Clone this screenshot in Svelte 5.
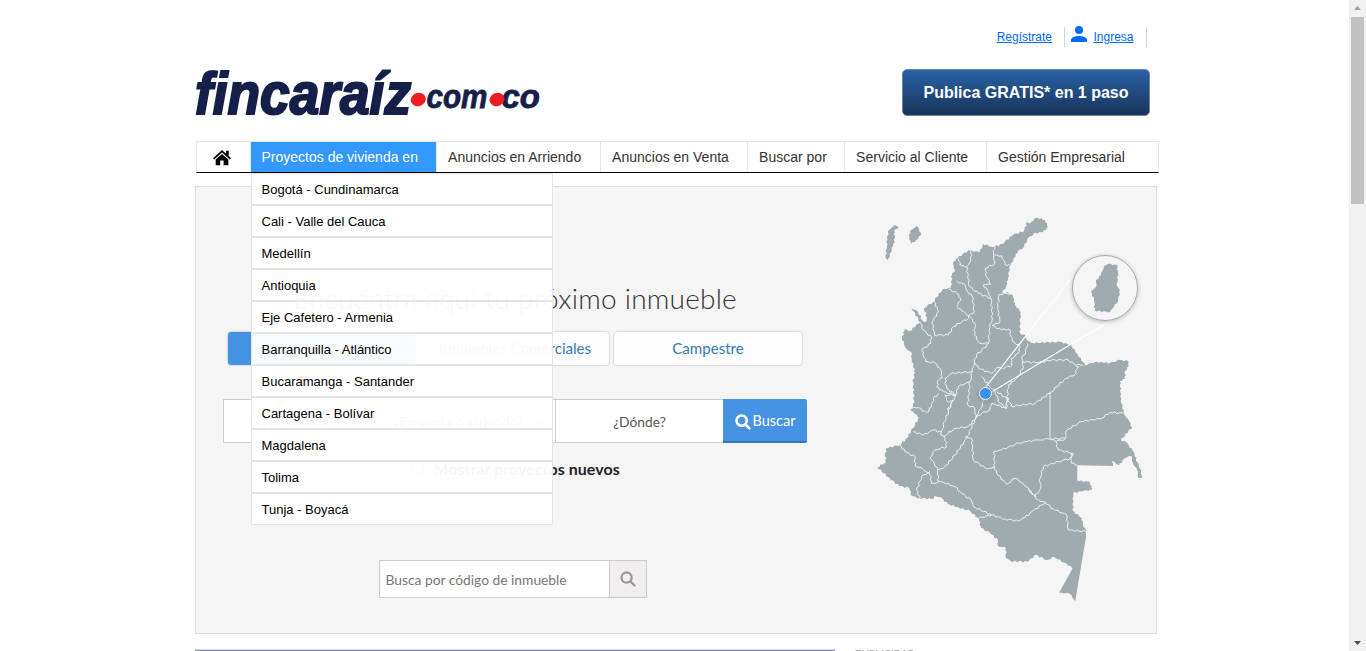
<script>
  const navItems = [
    { label: 'Anuncios en Arriendo', w: 164 },
    { label: 'Anuncios en Venta', w: 147 },
    { label: 'Buscar por', w: 97 },
    { label: 'Servicio al Cliente', w: 142 },
    { label: 'Gestión Empresarial', w: 172 }
  ];
  const places = [
    'Bogotá - Cundinamarca', 'Cali - Valle del Cauca', 'Medellín', 'Antioquia',
    'Eje Cafetero - Armenia', 'Barranquilla - Atlántico', 'Bucaramanga - Santander',
    'Cartagena - Bolívar', 'Magdalena', 'Tolima', 'Tunja - Boyacá'
  ];

  const country = '1038,218 1045,220 1048,227 1043,232 1036,233 1029,237 1023,248 1018,251 1010,266 1008,278 1006,287 1001,294 1007,292 1013,296 1015,305 1021,312 1020,322 1020,333 1026,336 1027,340 1031,343 1060,342 1071,345 1078,355 1085,365 1095,362 1110,363 1120,360 1128,361 1129,366 1125,371 1125,379 1120,381 1121,400 1124,414 1128,419 1132,427 1121,440 1126,442 1134,452 1137,462 1141,470 1141.5,478 1138.5,478 1137,470 1133,463 1131,456 1125,458 1119,465 1112,461 1113,466';
  const straightEast = '1077.3,465.3 1077.3,480.7';
  const south = '1077.3,480.7 1090,482 1092,490 1083,491 1073,493 1073,511 1082,518 1083,525 1086,530';
  const straightSouth = '1086,537 1075.3,601';
  const west = '1075.3,601 1070,594 1066,593 1059,593';
  const coast = '1072.7,568 1065,563 1054,557 1047,560 1036,555 1027,561.5 1011,561.5 1006,558 1006,548 998,546 998,540 990,533 981,528 979,519 970,511 957,507 948,504 940,497 934,496 933,499 919,498 912,496 909,488 899,486 888,477 877.3,467.3 886,462 885,453 887,448 900,445 907,438 913,428 919,418 915,414 910,410 913,407 914,400 913,382 915,373 912,360 911,352 905.7,348 902,338 905,329 910,331 920,322 911.5,308 917.7,311 922,320 926,322 926.7,317 924,308 933,302 943,289 951,288 952,275 955,270 953,264 956,259 968,250.5 980,252 983,244 993,247 1002,244 1013,235 1024,231 1027,222 1031,223 1034,219 1038,218';
  const borders = [
    '318,137 318,165 305,185 313,245 340,265 378,280 382,340 375,365 370,415 345,415 328,390 330,355 312,332',
    '280,160 285,180 305,188', '275,228 300,240 308,260 322,275 328,320 312,332 310,340 265,365 250,390 208,390 202,350 220,320 208,290',
    '252,252 275,265 287,280 276,305 290,318 312,332', '388,122 386,150 388,178 360,190 365,215 378,238 355,240 372,262 374,280',
    '388,150 410,152 420,178 437,183', '437,265 402,268 398,310 405,350 382,362 410,375 432,372 442,408 466,425',
    '165,350 175,375 200,398 198,415 170,435 182,470 210,473 225,490 233,518 220,525 215,545 235,560 272,570',
    '372,415 335,450 328,470 322,500 258,505 240,520 245,550 272,570 280,545 305,533 315,530 322,500',
    '466,425 460,445 438,462 442,480 415,490 395,488 380,505 340,490 328,470',
    '488,415 482,440 470,460 475,485 462,510 450,525 430,540 424,610 405,595 390,560 370,540 350,515',
    '315,530 308,600 330,610 332,640 310,665 270,670 235,695',
    '272,570 262,590 250,620 235,660 228,690 240,700 245,725 210,735 195,758 205,770 218,795',
    '272,570 240,570 250,592 265,585 248,615', '140,610 160,608 185,623 200,605 205,580 220,565',
    '145,680 175,690 205,675 230,682', '332,640 305,700 270,750 240,785 218,795 220,830',
    '355,560 352,600 340,625 332,640', '395,560 425,580 424,610 390,598 380,595 375,615 350,625 332,640',
    '300,695 320,700 325,765 365,792 388,785 388,738 410,735 450,718 480,710 520,705 550,702 600,700',
    '470,470 520,473 560,465 610,465 640,485 628,510 602,520 560,560 510,595 440,604 425,575',
    '635,480 655,480', '555,700 572,710 600,702 605,675 650,650 710,640 735,622 775,625',
    '572,710 580,735 625,745 615,760 580,770 535,785 525,820 527,850 510,875 492,855',
    '618,745 620,775 637,780', '105,720 120,740 150,755 150,782 172,790 195,810 200,835 230,830 270,845 290,865 318,885 325,905 380,930 420,942 460,948 480,938 500,920 540,893 565,912 605,930 610,975 663,980',
    '388,785 395,805 425,838 450,820 475,835 492,855 520,885 545,895', '195,800 170,815 155,855 165,880', '340,940 380,930'
  ];
  // Subdivides a polyline and offsets the new points, giving a natural boundary.
  function rough(points, amount, step) {
    const p = points.split(' ').map((s) => s.split(',').map(Number));
    const out = [p[0]];
    for (let i = 1; i < p.length; i++) {
      const [ax, ay] = p[i - 1];
      const [bx, by] = p[i];
      const len = Math.hypot(bx - ax, by - ay);
      const n = Math.max(1, Math.round(len / step));
      for (let k = 1; k < n; k++) {
        const t = k / n;
        const h = Math.sin((ax + bx * 1.7 + ay) * 12.9 + k * 2.3) * amount;
        out.push([ax + (bx - ax) * t - ((by - ay) / len) * h, ay + (by - ay) * t + ((bx - ax) / len) * h]);
      }
      out.push([bx, by]);
    }
    return out.map(([x, y]) => x.toFixed(1) + ',' + y.toFixed(1)).join(' ');
  }
  const outline = [rough(country, 0.8, 2), straightEast, rough(south, 0.8, 2), straightSouth, rough(west, 0.6, 2), rough(coast, 0.9, 2)].join(' ');
</script>

{#snippet magnifier()}
  <svg class="mag" viewBox="0 0 16 16"><circle cx="6.6" cy="6.6" r="5.1" /><path d="M10.5 10.5 14.4 14.4" /></svg>
{/snippet}

<div class="window">
  <div class="page">
    <header>
      <div class="user">
        <a href="#registro">Regístrate</a>
        <span class="login">
          <svg width="16" height="16" viewBox="0 0 16 16"><circle cx="8" cy="4" r="4" /><path d="M0 16v-2c0-2.7 4.5-4 8-4s8 1.3 8 4v2z" /></svg>
          <a href="#ingresa">Ingresa</a>
        </span>
      </div>
      <div class="brand">
        <svg class="logo" width="350" height="60" viewBox="0 0 350 60">
          <g class="word">
            <text class="big" x="0" y="50.3" font-size="59" textLength="216" lengthAdjust="spacingAndGlyphs">fincaraíz</text>
            <text x="231.5" y="43.6" font-size="32.5" textLength="61" lengthAdjust="spacingAndGlyphs">com</text>
            <text x="306.5" y="43.6" font-size="32.5" textLength="38.5" lengthAdjust="spacingAndGlyphs">co</text>
          </g>
          <g fill="#ef1c23">
            <ellipse cx="223.3" cy="35.5" rx="7.6" ry="6.6" transform="rotate(-20 223.3 35.5)" />
            <ellipse cx="302" cy="35.5" rx="7.6" ry="6.6" transform="rotate(-20 302 35.5)" />
          </g>
        </svg>
        <button class="publish">Publica GRATIS* en 1 paso</button>
      </div>
    </header>

    <nav>
      <div class="home">
        <svg width="18" height="16" viewBox="0 0 18 16"><path d="M9 0 0 8.2 1.2 9.5 9 2.6l7.8 6.9L18 8.2 15.7 6V.8h-2.6v2.9z" /><path d="M9 4 2.7 9.5V15.2h4.5v-4.7h3.4v4.7h4.7V9.5z" /></svg>
      </div>
      <div class="active">
        Proyectos de vivienda en
        <ul>
          {#each places as place}<li><span>{place}</span></li>{/each}
        </ul>
      </div>
      {#each navItems as item}
        <div class="item" style="width: {item.w}px">{item.label}</div>
      {/each}
    </nav>

    <main>
      <section class="form">
        <h1>Encuentra aquí tu próximo inmueble</h1>
        <div class="tabs">
          <div class="tab on">Vivienda</div>
          <div class="tab">Inmuebles Comerciales</div>
          <div class="tab">Campestre</div>
        </div>
        <div class="search">
          <div class="field what">¿Qué buscas?<svg width="10" height="6" viewBox="0 0 10 6"><path d="M.5.5 5 5 9.5.5" /></svg></div>
          <div class="field deal">¿En venta o arriendo?<svg width="10" height="6" viewBox="0 0 10 6"><path d="M.5.5 5 5 9.5.5" /></svg></div>
          <div class="field where">¿Dónde?</div>
          <button class="go">{@render magnifier()}Buscar</button>
        </div>
        <label><span class="check"></span>Mostrar proyectos nuevos</label>
        <div class="code">
          <span>Busca por código de inmueble</span>
          <button>{@render magnifier()}</button>
        </div>
      </section>
      <svg class="map" width="285" height="410" viewBox="865 205 285 410">
        <defs>
          <filter id="soft" x="-30%" y="-30%" width="160%" height="160%"><feDropShadow dx="0" dy="1" stdDeviation="2" flood-opacity=".25" /></filter>
        </defs>
        <g class="land">
          <polygon points={outline} />
          <polygon points={rough('895,225 899,228 894,230 895,238 893,246 888,260 885.5,258 887,246 887,238 889,230', 0.8, 2.2)} />
          <polygon points={rough('917,226 921,233 918,239 911,244 909,239 910,231', 0.8, 2.2)} />
        </g>
        <g class="borders" transform="translate(865 205) scale(.33333)">
          {#each borders as line}<polyline points={rough(line, 2.8, 7)} />{/each}
          <path d="M555 560V700" />
        </g>
        <g class="rays"><path d="M985 388 1073 276" /><path d="M990 393 1113 319" /></g>
        <circle class="lens" cx="1105" cy="288" r="32.5" filter="url(#soft)" />
        <polygon class="inset" points={rough('1108,264 1117,265 1118,273 1117,286 1120,290 1118,301 1114,307 1110,312 1095,311 1094,300 1091,291 1096,287 1096,280 1101,275 1104,266', 0.8, 2.2)} />
        <circle class="halo" cx="986" cy="395" r="9" />
        <circle class="dot" cx="985.4" cy="393.5" r="6" />
      </svg>
    </main>

    <footer><div class="rule"></div><span>PUBLICIDAD</span></footer>
  </div>
  <div class="scrollbar">
    <svg width="7" height="4" viewBox="0 0 7 4"><path d="M0 4 3.5 0 7 4z" fill="#a3a3a3" /></svg>
    <div class="thumb"></div>
    <svg width="7" height="4" viewBox="0 0 7 4"><path d="M0 0 3.5 4 7 0z" fill="#505050" /></svg>
  </div>
</div>

<style>
  :global(body) { background: #fff; overflow: hidden; }
  * { box-sizing: border-box; }
  .window { display: grid; grid-template-columns: 1fr 17px; height: 651px; overflow: hidden; font-family: "Liberation Sans", Arial, sans-serif; }
  .page { width: 964px; height: 651px; margin-left: 195px; overflow: hidden; }
  header { height: 141px; padding-top: 26px; }
  .user { display: flex; justify-content: flex-end; height: 21px; margin-right: 12px; padding-top: 1px; font-size: 12px; line-height: 20px; }
  .user a { color: #0069ff; text-decoration: underline; }
  .login { display: flex; width: 83px; height: 20px; margin-left: 12px; padding-left: 6px; border-left: 1px solid #c9d5ea; border-right: 1px solid #c9d5ea; }
  .login svg { margin: -1px 6.5px 0 0; fill: #0069ff; }
  .brand { display: flex; justify-content: space-between; padding-right: 9px; margin-top: 17px; }
  .logo { flex: none; overflow: visible; }
  .word { font-family: "Liberation Sans", Arial, sans-serif; font-weight: bold; font-style: italic; font-variant-ligatures: none; fill: #151f49; stroke: #151f49; stroke-width: .8; }
  .big { stroke-width: 2.2; }
  .publish { width: 248px; height: 47px; margin-top: 5px; border: 1px solid #7180a5; border-radius: 5px; background: linear-gradient(#2a61a7, #18355a); color: #fff; font: bold 16px "Liberation Sans", Arial, sans-serif; padding: 0; white-space: nowrap; }
  nav { display: flex; width: 963px; height: 32px; margin-left: 1px; border: 1px solid #e5e5e5; border-bottom-color: #000; font-size: 14px; line-height: 30px; color: #333; white-space: nowrap; }
  .home { flex: none; width: 54px; border-right: 1px solid #e5e5e5; padding: 8px 0 0 16px; line-height: 0; }
  .active { position: relative; flex: none; width: 186px; padding-left: 10.5px; background: #39f; background-clip: padding-box; border-right: 1px solid #e5e5e5; color: #fff; }
  .item { flex: none; padding-left: 11.1px; border-right: 1px solid #e5e5e5; }
  .item:last-child { flex: 1; border-right: 0; }
  ul { position: absolute; z-index: 2; left: 0; top: 31px; width: 302px; margin: 0; padding: 0; list-style: none; color: #000; font-size: 13px; }
  li { height: 32px; padding-left: 9.5px; border: 1px solid #e5e5e5; background: rgba(255, 255, 255, .96); line-height: 31px; }
  main { display: flex; width: 962px; height: 448px; margin-top: 13px; border: 1px solid #ddd; background: #f5f5f5; }
  .form { display: flex; flex-direction: column; align-items: center; width: 638px; font-family: Lato, sans-serif; }
  h1 { margin: 92px 0 0; height: 52px; font-size: 28px; font-weight: 300; letter-spacing: .24px; line-height: 38px; color: #333; white-space: nowrap; }
  .tabs { display: flex; gap: 3px; }
  .tab { width: 190px; height: 35px; border: 1px solid #ddd; border-radius: 4px; background: #fdfdfd; color: #337ab7; font-size: 15.1px; line-height: 33px; text-align: center; white-space: nowrap; }
  .tab.on { background: #4593e2; color: #fff; }
  .search { display: flex; width: 584px; height: 44px; margin-top: 33px; font-size: 13.8px; line-height: 44px; color: #555; }
  .field { display: flex; align-items: center; justify-content: center; padding-top: 2px; border: 1px solid #ccc; border-right: 0; background: #fff; white-space: nowrap; }
  .field svg { fill: none; stroke: #555; margin-left: 15px; }
  .what { width: 138px; padding-left: 25px; }
  .deal { width: 194px; padding-left: 25px; border-right: 0; }
  .where { width: 168px; }
  .go { display: flex; align-items: center; justify-content: center; width: 84px; height: 44px; padding: 1px 0 0; border: 0; border-bottom: 2px solid #2f77c0; border-radius: 0 2px 2px 0; background: #4593e2; color: #fff; font: 14.5px Lato, sans-serif; }
  .mag { width: 16px; height: 16px; fill: none; stroke: currentColor; stroke-width: 2.6; stroke-linecap: round; }
  .go .mag { margin: 2px 2px 0 0; }
  label { display: flex; align-items: center; height: 20px; margin-top: 15px; padding-left: 2px; font-size: 16px; font-weight: bold; letter-spacing: .04px; color: #222; white-space: nowrap; }
  .check { width: 12px; height: 12px; margin-right: 9px; border: 1px solid #999; background: #fff; border-radius: 2px; }
  .code { display: flex; width: 268px; height: 38px; margin: 82px 4px 0 0; border: 1px solid #ccc; background: #fff; color: #777; font-size: 13.8px; line-height: 37px; }
  .code span { width: 230px; padding: 0 0 0 5.5px; white-space: nowrap; }
  .code button { width: 37px; padding: 0; border: 0; border-left: 1px solid #ccc; background: #f2eef0; color: #999; line-height: 0; }
  .code .mag { stroke-width: 2.3; }
  .map { flex: none; margin: 18px 0 0 31px; }
  .land, .inset { fill: #a0abaf; }
  .borders { fill: none; stroke: #eff1f1; stroke-width: 2.9; }
  .rays { fill: none; stroke: #fff; stroke-width: 1.2; }
  .lens { fill: #f5f5f5; stroke: #a0abaf; }
  .halo { fill: #849095; opacity: .4; }
  .dot { fill: #3394f4; stroke: #f5f5f5; }
  footer { display: flex; margin-top: 15px; font-size: 10px; line-height: 12px; color: #999; }
  .rule { width: 640px; height: 3px; border-top: 1px solid #dde0ea; background: #8290b8; margin-right: 20px; }
  .scrollbar { display: flex; flex-direction: column; align-items: center; background: #f1f1f1; padding: 6px 0; }
  .thumb { width: 13px; height: 187px; margin: 7px 0 auto; background: #c1c1c1; }
</style>
